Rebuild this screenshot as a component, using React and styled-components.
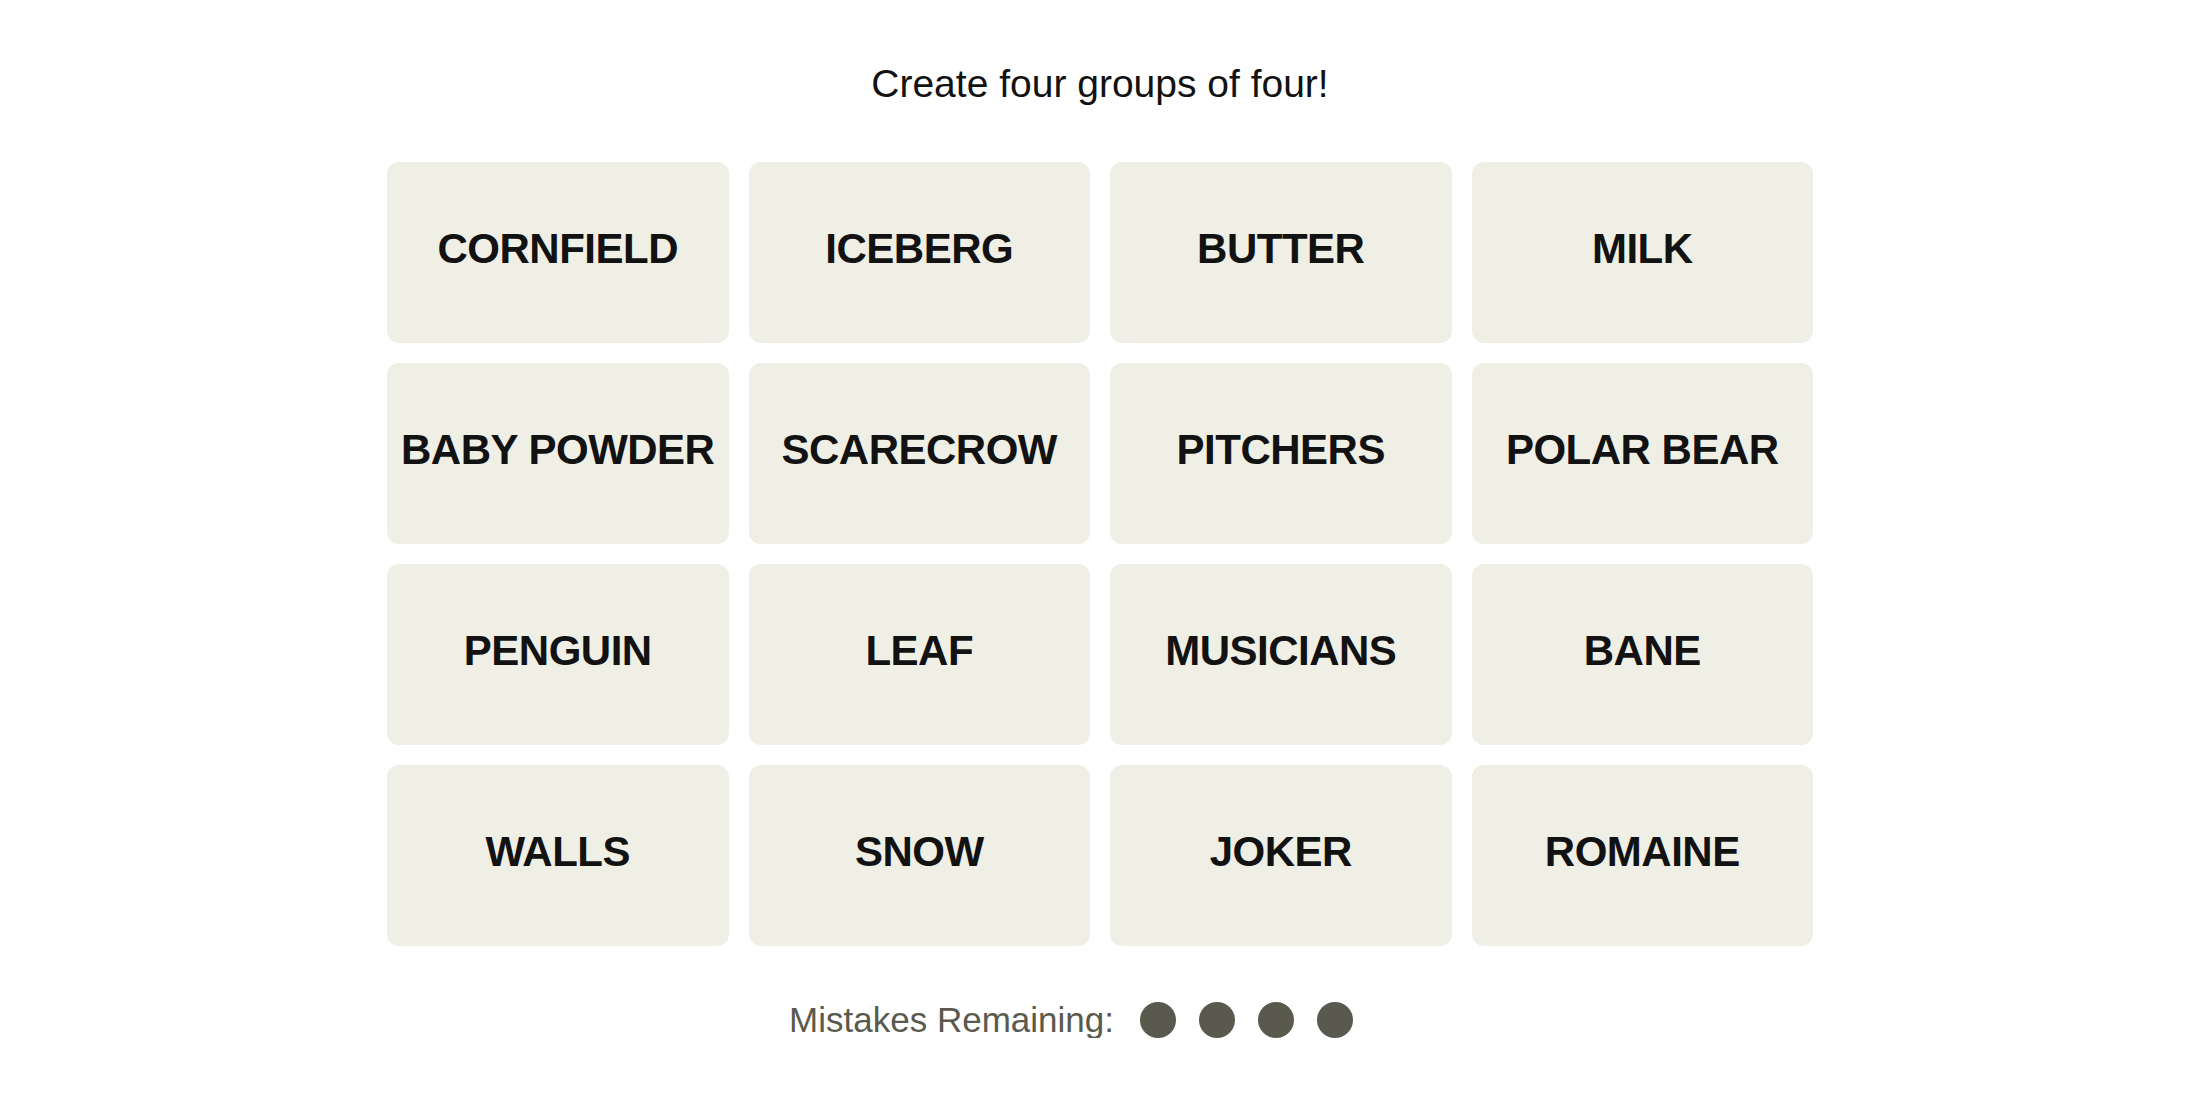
import styled, { createGlobalStyle } from "styled-components";

const words = [
    "CORNFIELD", "ICEBERG", "BUTTER", "MILK",
    "BABY POWDER", "SCARECROW", "PITCHERS", "POLAR BEAR",
    "PENGUIN", "LEAF", "MUSICIANS", "BANE",
    "WALLS", "SNOW", "JOKER", "ROMAINE",
];

export default function App() {
    const mistakes = 4;

    return (
        <>
            <GlobalStyle />
            <Board>
                <Title>Create four groups of four!</Title>
                <Grid>
                    {words.map((w) => (
                        <Tile key={w}>{w}</Tile>
                    ))}
                </Grid>
                <Mistakes>
                    <Label>Mistakes Remaining:</Label>
                    <Dots>
                        {Array.from({ length: mistakes }).map((_, i) => (
                            <Dot key={i} />
                        ))}
                    </Dots>
                </Mistakes>
            </Board>
        </>
    );
}

const GlobalStyle = createGlobalStyle`
    body {
        margin: 0;
        background: #ffffff;
        font-family: "Liberation Sans", Arial, sans-serif;
    }
`;

const Board = styled.main`
    display: flex;
    flex-direction: column;
    align-items: center;
    padding-top: 60px;
`;

const Title = styled.h1`
    margin: 0;
    font-size: 39px;
    font-weight: 400;
    line-height: 48px;
    color: #121212;
`;

const Grid = styled.div`
    margin-top: 54px;
    display: grid;
    grid-template-columns: repeat(4, 341.5px);
    grid-auto-rows: 181px;
    column-gap: 20px;
    row-gap: 20px;
`;

const Tile = styled.button`
    border: none;
    border-radius: 12px;
    background: #efefe6;
    color: #121212;
    font-family: "Liberation Sans", Arial, sans-serif;
    font-weight: 700;
    font-size: 42px;
    letter-spacing: -0.5px;
    display: flex;
    align-items: center;
    justify-content: center;
    padding: 0 0 7px;
    cursor: pointer;
`;

const Mistakes = styled.div`
    margin-top: 56px;
    display: flex;
    align-items: center;
    gap: 26px;
`;

const Label = styled.span`
    font-size: 35px;
    line-height: 36px;
    color: #5a594e;
`;

const Dots = styled.div`
    width: 271px;
    display: flex;
    gap: 23px;
`;

const Dot = styled.span`
    width: 36px;
    height: 36px;
    border-radius: 50%;
    background: #5a594e;
`;
